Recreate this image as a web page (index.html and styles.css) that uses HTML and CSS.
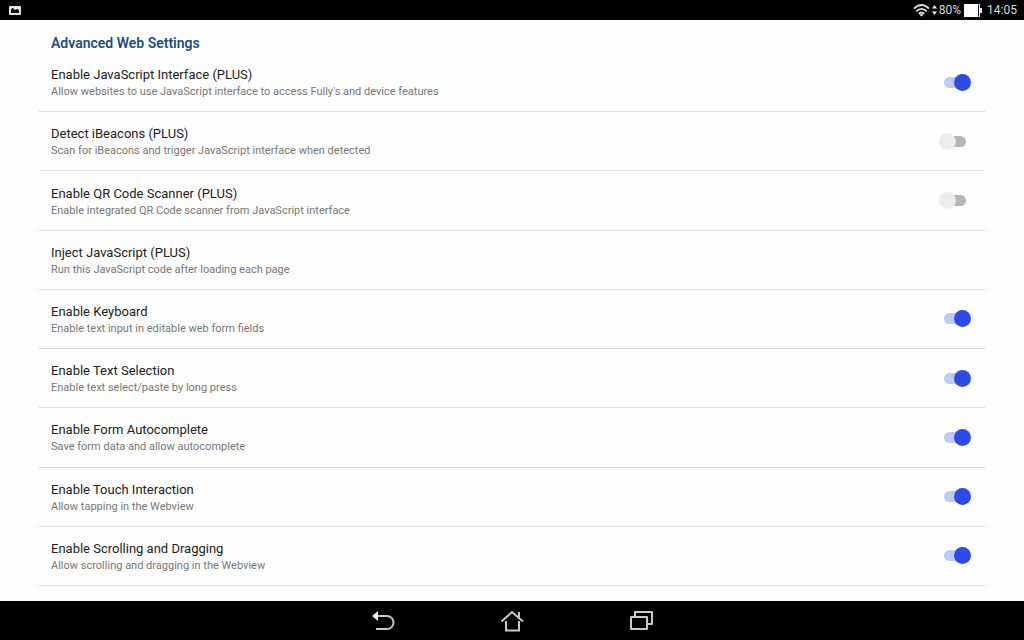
FILE: index.html
```html
<!DOCTYPE html>
<html lang="en">
<head>
  <meta charset="UTF-8">
  <meta name="viewport" content="width=device-width, initial-scale=1.0">
  <title>Advanced Web Settings</title>
  <link rel="stylesheet" href="styles.css">
</head>
<body>
  <!-- Status bar -->
  <header class="status-bar">
    <svg class="picture-icon" width="12" height="9" viewBox="0 0 12 9">
      <rect width="12" height="9" rx="1" fill="#e4e4e4"/>
      <path d="M2 7V3l2-1 2 2 2-1 2 1v3z" fill="#111"/>
    </svg>
    <div class="status-info">
      <svg width="17" height="14" viewBox="0 0 18 14" fill="none" stroke="#ddd" stroke-width="2">
        <path d="M1 5.500Q9-2 17 5.500M3.500 8.300q5.500-5 11 0M6 11q3-2.700 6 0"/>
        <path d="M9 14l-2-2q2-1.500 4 0z" fill="#eee" stroke="none"/>
      </svg>
      <svg width="5" height="12" viewBox="0 0 5 12" fill="#eee">
        <path d="M0 4.500L2.500 1 5 4.500zM0 7.500h5L2.500 11z"/>
      </svg>
      <span class="battery-level">80%</span>
      <svg class="battery-icon" width="18" height="13" viewBox="0 0 18 13">
        <path d="M0 0h16v4h2v5h-2v4H0z" fill="#777"/>
        <path d="M0 0h14v13H0z" fill="#fff"/>
        <path d="M14 1h1v11h-1z" fill="#111"/>
        <path d="M15 0h1v4h2v5h-2v4h-1z" fill="#eee"/>
      </svg>
      <span>14:05</span>
    </div>
  </header>

  <!-- Settings -->
  <main class="settings">
    <h1>Advanced Web Settings</h1>
    <ul class="settings-list">
      <li class="setting">
        <label for="jsInterface">
          <span class="title">Enable JavaScript Interface (PLUS)</span>
          <span class="summary">Allow websites to use JavaScript interface to access Fully's and device features</span>
        </label>
        <input type="checkbox" class="switch" id="jsInterface" checked>
      </li>
      <li class="setting">
        <label for="iBeacons">
          <span class="title">Detect iBeacons (PLUS)</span>
          <span class="summary">Scan for iBeacons and trigger JavaScript interface when detected</span>
        </label>
        <input type="checkbox" class="switch" id="iBeacons">
      </li>
      <li class="setting">
        <label for="qrScanner">
          <span class="title">Enable QR Code Scanner (PLUS)</span>
          <span class="summary">Enable integrated QR Code scanner from JavaScript interface</span>
        </label>
        <input type="checkbox" class="switch" id="qrScanner">
      </li>
      <li class="setting">
        <a href="#inject">
          <span class="title">Inject JavaScript (PLUS)</span>
          <span class="summary">Run this JavaScript code after loading each page</span>
        </a>
      </li>
      <li class="setting">
        <label for="keyboard">
          <span class="title">Enable Keyboard</span>
          <span class="summary">Enable text input in editable web form fields</span>
        </label>
        <input type="checkbox" class="switch" id="keyboard" checked>
      </li>
      <li class="setting">
        <label for="textSelection">
          <span class="title">Enable Text Selection</span>
          <span class="summary">Enable text select/paste by long press</span>
        </label>
        <input type="checkbox" class="switch" id="textSelection" checked>
      </li>
      <li class="setting">
        <label for="autocomplete">
          <span class="title">Enable Form Autocomplete</span>
          <span class="summary">Save form data and allow autocomplete</span>
        </label>
        <input type="checkbox" class="switch" id="autocomplete" checked>
      </li>
      <li class="setting">
        <label for="touch">
          <span class="title">Enable Touch Interaction</span>
          <span class="summary">Allow tapping in the Webview</span>
        </label>
        <input type="checkbox" class="switch" id="touch" checked>
      </li>
      <li class="setting">
        <label for="scrolling">
          <span class="title">Enable Scrolling and Dragging</span>
          <span class="summary">Allow scrolling and dragging in the Webview</span>
        </label>
        <input type="checkbox" class="switch" id="scrolling" checked>
      </li>
    </ul>
  </main>

  <!-- Navigation bar -->
  <nav class="nav-bar">
    <button type="button" aria-label="Back">
      <svg width="24" height="24" viewBox="0 0 24 24">
        <path d="M6 7h10a6 6 0 0 1 0 13H5" fill="none" stroke="#c8c8c8" stroke-width="2"/>
        <path d="M1 7L7 2v10z" fill="#eee"/>
      </svg>
    </button>
    <button type="button" aria-label="Home">
      <svg width="24" height="24" viewBox="0 0 24 24" fill="none" stroke="#c8c8c8" stroke-width="2">
        <path d="M1.500 12.500L12 3 23 12.500M19 9V3M6 12V21.500h13V12"/>
      </svg>
    </button>
    <button type="button" aria-label="Recent apps">
      <svg width="24" height="24" viewBox="0 0 24 24" fill="none" stroke="#c8c8c8" stroke-width="2">
        <path d="M2 8h16v12H2zM6 8V3h17v12h-5" stroke-linejoin="round"/>
      </svg>
    </button>
  </nav>
</body>
</html>
```
FILE: styles.css
```css
* {
  box-sizing: border-box;
}

body {
  font-family: Roboto, "Noto Sans", sans-serif;
  background-color: #fefefe;
  margin: 0;
  min-height: 100vh;
  display: flex;
  flex-direction: column;
}

.status-bar {
  display: flex;
  justify-content: space-between;
  align-items: center;
  height: 20px;
  padding: 0 7px 0 9px;
  background-color: #000;
  color: #ddd;
  font-size: 12px;
}

.status-info {
  display: flex;
  align-items: center;
  gap: 2px;
}

.battery-icon {
  margin: 0 3px 0 1px;
}

.settings {
  flex: 1;
  display: flex;
  flex-direction: column;
  padding: 13px 39px 15px;
}

.settings h1 {
  margin: 0;
  padding-left: 12px;
  font-size: 14px;
  line-height: 20px;
  font-weight: 600;
  color: #1f4e85;
}

.settings-list {
  flex: 1;
  display: grid;
  grid-auto-rows: 1fr;
  margin: 0;
  padding: 0;
  list-style: none;
}

.setting {
  display: flex;
  align-items: center;
  justify-content: space-between;
  padding: 4px 14px 4px 12px;
  border-bottom: 1px solid #ddd;
}

.setting label,
.setting a {
  flex: 1;
  padding-top: 2px;
  color: #222;
  text-decoration: none;
}

.title,
.summary {
  display: block;
}

.title {
  font-size: 13px;
  line-height: 18px;
}

.summary {
  font-size: 11px;
  line-height: 16px;
  color: #777;
}

/* both parts of the switch share one grid cell */
.switch {
  appearance: none;
  display: grid;
  align-items: center;
  width: 32px;
  height: 17px;
  margin: 0;
  cursor: pointer;
}

.switch::before,
.switch::after {
  content: "";
  grid-area: 1 / 1;
}

.switch::before {
  height: 11px;
  margin: 0 5px;
  border-radius: 6px;
  background-color: #b5b5b5;
}

.switch::after {
  width: 17px;
  height: 17px;
  border-radius: 50%;
  background-color: #ececec;
}

.switch:checked::before {
  background-color: #becaf6;
}

.switch:checked::after {
  justify-self: end;
  background-color: #2c4be6;
}

.nav-bar {
  display: flex;
  justify-content: center;
  align-items: center;
  gap: 105px;
  height: 39px;
  background-color: #000;
}

.nav-bar button {
  display: flex;
  padding: 0;
  border: none;
  background: none;
  cursor: pointer;
}
```
